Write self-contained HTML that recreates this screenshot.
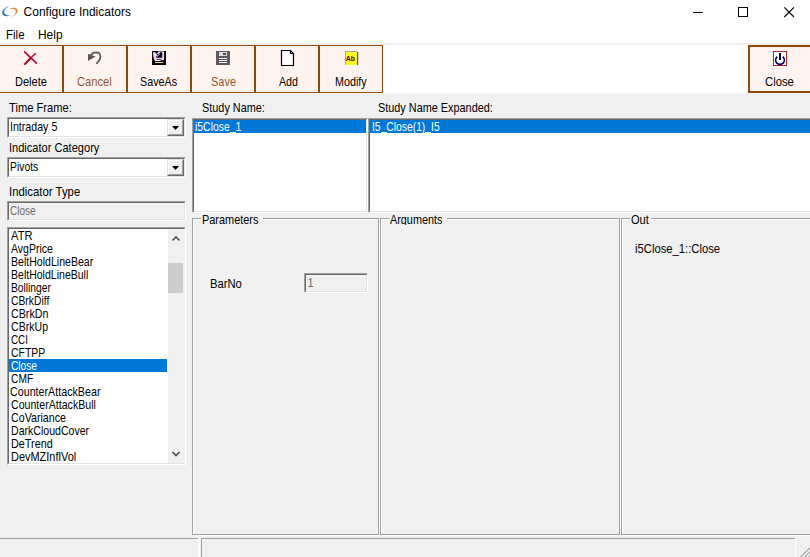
<!DOCTYPE html>
<html>
<head>
<meta charset="utf-8">
<title>Configure Indicators</title>
<style>
html,body{margin:0;padding:0;overflow:hidden;}
body{width:810px;height:557px;overflow:hidden;background:#f0f0f0;position:relative;
  font-family:"Liberation Sans",sans-serif;font-size:11px;line-height:13px;color:#000;}
.a{position:absolute;}
.t{position:absolute;white-space:nowrap;transform-origin:0 0;}
#titlebar{left:0;top:0;width:810px;height:30px;background:#fff;}
#menubar{left:0;top:24px;width:810px;height:19px;background:#fff;}
#tbline{left:0;top:43px;width:810px;height:2px;background:#f0f0f0;}
#toolbar{left:0;top:45px;width:810px;height:48px;background:#fff;overflow:hidden;border-bottom:1px solid #f8f7f6;}
.btn{position:absolute;top:0;width:62px;height:46px;border:1px solid #93480e;background:#fff4ef;}
/* sunken 3d */
.sunk{position:absolute;box-sizing:border-box;border:1px solid;border-color:#a0a0a0 #fff #fff #a0a0a0;background:#fff;}
.sunk>.in{position:absolute;left:0;top:0;right:0;bottom:0;box-sizing:border-box;border:1px solid;border-color:#696969 #e3e3e3 #e3e3e3 #696969;}
.sunk.g{background:#f0f0f0;}
.dd{position:absolute;right:1px;top:1px;width:17px;height:17px;box-sizing:border-box;background:#f0f0f0;border:1px solid;border-color:#e3e3e3 #696969 #696969 #e3e3e3;}
.dd:before{content:"";position:absolute;left:0;top:0;right:0;bottom:0;border:1px solid;border-color:#fff #a0a0a0 #a0a0a0 #fff;}
.dd:after{content:"";position:absolute;left:4px;top:6px;width:7px;height:4px;background:#000;clip-path:polygon(0 0,100% 0,50% 100%);}
.sel{position:absolute;background:#0078d7;height:13px;}
.gb{position:absolute;box-sizing:border-box;border:1px solid #a0a0a0;box-shadow:1px 1px 0 #fff, inset 1px 1px 0 #fff;}
.gl{position:absolute;background:#f0f0f0;height:13px;}
</style>
</head>
<body>
<!-- title bar -->
<div id="titlebar" class="a"></div>
<svg class="a" style="left:0;top:0" width="22" height="24" viewBox="0 0 22 24">
  <defs>
    <linearGradient id="lb1" x1="0" y1="1" x2="1" y2="0">
      <stop offset="0" stop-color="#1a62ad"/><stop offset="0.6" stop-color="#3f86c8"/><stop offset="1" stop-color="#a8cdec"/>
    </linearGradient>
    <linearGradient id="lo1" x1="1" y1="0" x2="0" y2="1">
      <stop offset="0" stop-color="#d9721c"/><stop offset="0.6" stop-color="#e89040"/><stop offset="1" stop-color="#f8d8b0"/>
    </linearGradient>
  </defs>
  <path d="M11.6 5.2C6 6 1.6 10 2.3 13.5C3 16.6 8 17 11.5 15.1C8 16 4.3 14.8 4.1 12.2C3.9 9.6 7.1 6.6 11.6 5.2Z" fill="url(#lb1)"/>
  <path d="M8.7 9.4C11 7.4 15.6 7 17.3 9.5C18.7 12 15 16.5 9.5 17.9C13.5 16.3 16.4 13 15.8 10.7C15.1 8.5 11 8.2 8.7 9.4Z" fill="url(#lo1)"/>
</svg>
<svg class="a" style="left:680px;top:0" width="130" height="30" viewBox="680 0 130 30">
  <path d="M693 12.5H703" stroke="#000" stroke-width="1" fill="none"/>
  <rect x="738.5" y="7.5" width="9" height="9" stroke="#000" stroke-width="1" fill="none"/>
  <path d="M784.3 7.3L794 17M794 7.3L784.3 17" stroke="#000" stroke-width="1.1" fill="none"/>
</svg>
<!-- menu -->
<div id="menubar" class="a"></div>
<div id="tbline" class="a"></div>
<!-- toolbar -->
<div id="toolbar" class="a">
  <div class="btn" style="left:-1px"></div>
  <div class="btn" style="left:63px"></div>
  <div class="btn" style="left:127px"></div>
  <div class="btn" style="left:191px"></div>
  <div class="btn" style="left:255px"></div>
  <div class="btn" style="left:319px"></div>
  <div class="btn" style="left:748px;border-width:2px;width:60px;height:44px"></div>
  <svg class="a" style="left:0;top:0" width="810" height="48" viewBox="0 45 810 48">
    <!-- delete -->
    <path d="M24.6 51.8L36.4 63.2" stroke="#b0082c" stroke-width="1.6" stroke-linecap="round" fill="none"/>
    <path d="M35.4 53.6L30.5 58.2" stroke="#b0082c" stroke-width="1.4" stroke-linecap="round" fill="none"/>
    <path d="M30.5 58.2L25 63.9" stroke="#b0082c" stroke-width="2.1" stroke-linecap="round" fill="none"/>
    <!-- cancel (undo) -->
    <path d="M88 54V61L95.6 56.4Z" fill="#5a5454"/>
    <path d="M90.5 55.6L93.5 52.6H98.6Q100.6 54.4 100.5 56.6Q100.2 59.4 98.4 61.2L96.9 63.3" stroke="#5a5454" stroke-width="1.7" fill="none" stroke-linejoin="round" stroke-linecap="round"/>
    <!-- saveas -->
    <rect x="152" y="51" width="14" height="14" fill="#000"/>
    <path d="M152.7 52.6L155 52L156.2 53.6L158.4 51.5H164.1V60.3H154.3L153.5 57.2Z" fill="#f3cdf7"/>
    <path d="M156.3 57.8V56.6L160.4 52.3L162.2 52.5V57.8Z" fill="#000"/>
    <path d="M155.2 51.4H158.4L156.3 54Z" fill="#000"/>
    <path d="M157 56.5L159.8 54" stroke="#f3cdf7" stroke-width="0.9" fill="none"/>
    <circle cx="157.6" cy="54.4" r="0.7" fill="#000"/>
    <path d="M156.5 59.4H161.4" stroke="#000" stroke-width="0.7"/>
    <path d="M155 60.5H160.7" stroke="#fff" stroke-width="0.9"/>
    <path d="M155 62.5H163.3" stroke="#e8e070" stroke-width="1"/>
    <!-- save -->
    <rect x="216" y="51" width="14" height="14" fill="#5c5a5a"/>
    <rect x="219" y="52" width="8" height="4" fill="#dcdcdc"/>
    <rect x="223" y="53" width="3" height="2" fill="#4a4a4a"/>
    <path d="M219 58.5H227M219 60.5H227M219 62.5H227" stroke="#f4f4f4" stroke-width="1"/>
    <!-- add -->
    <path d="M281.5 50.5H290.5L293.5 53.5V65.5H281.5Z" fill="#fff" stroke="#000" stroke-width="1.2"/>
    <path d="M290.5 50.5V53.5H293.5" fill="none" stroke="#000" stroke-width="1.2"/>
    <!-- modify -->
    <rect x="345.5" y="51.5" width="11" height="13" fill="#fdf820" stroke="#8c98a8" stroke-width="0.8"/>
    <rect x="346" y="52" width="11" height="13" fill="#fdf820"/>
    <rect x="357" y="52" width="1.2" height="13" fill="#4a5070"/>
    <text x="345.8" y="60.8" font-family="Liberation Sans, sans-serif" font-size="8" font-weight="bold" fill="#500000" textLength="9.2" lengthAdjust="spacingAndGlyphs">Ab</text>
    <!-- close -->
    <rect x="773.5" y="51.5" width="13" height="14" fill="#fff" stroke="#a82828" stroke-width="1"/>
    <rect x="779" y="53" width="2" height="7" fill="#000060"/>
    <path d="M777.3 56.6Q775.4 58.2 775.6 60.4Q776.2 64.2 780 64.4Q783.8 64.2 784.4 60.4Q784.6 58.2 782.7 56.6" stroke="#000060" stroke-width="1.6" fill="none"/>
    <rect x="779.5" y="65" width="1" height="1" fill="#600020"/>
  </svg>
</div>

<!-- left panel -->
<div class="sunk" style="left:7px;top:117px;width:179px;height:21px"><div class="in"></div><div class="dd"></div></div>
<div class="sunk" style="left:7px;top:157px;width:179px;height:21px"><div class="in"></div><div class="dd"></div></div>
<div class="sunk g" style="left:7px;top:201px;width:179px;height:20px"><div class="in"></div></div>

<div class="sunk" id="lb" style="left:7px;top:227px;width:179px;height:238px"><div class="in"></div>
  <div class="sel" style="left:1px;top:131px;width:158px"></div>
  <div class="a" style="left:160px;top:1px;width:17px;height:234px;background:#f0f0f0"></div>
  <div class="a" style="left:160px;top:35px;width:15px;height:30px;background:#cdcdcd"></div>
  <svg class="a" style="left:160px;top:1px" width="16" height="234" viewBox="0 0 16 234">
    <path d="M4.5 11.5L8 8L11.5 11.5" stroke="#505050" stroke-width="1.7" fill="none"/>
    <path d="M4.5 223L8 226.5L11.5 223" stroke="#505050" stroke-width="1.7" fill="none"/>
  </svg>
</div>

<!-- study name -->
<div class="sunk" style="left:192px;top:118px;width:176px;height:95px"><div class="in"></div>
  <div class="sel" style="left:1px;top:1px;width:172px"></div>
</div>
<div class="sunk" style="left:368px;top:118px;width:500px;height:95px"><div class="in"></div>
  <div class="sel" style="left:1px;top:1px;width:496px"></div>
</div>

<div class="a" style="left:230px;top:132px;width:6px;height:1px;background:#fff"></div>
<div class="a" style="left:381px;top:132px;width:6px;height:1px;background:#fff"></div>
<div class="a" style="left:425px;top:132px;width:6px;height:1px;background:#fff"></div>
<!-- group boxes -->
<div class="gb" style="left:192px;top:218px;width:187px;height:317px"></div>
<div class="gl" style="left:201px;top:213px;width:62px"></div>
<div class="gb" style="left:380px;top:218px;width:240px;height:317px"></div>
<div class="gl" style="left:389px;top:213px;width:58px"></div>
<div class="gb" style="left:621px;top:218px;width:300px;height:317px"></div>
<div class="gl" style="left:630px;top:213px;width:21px"></div>

<div class="sunk g" style="left:304px;top:273px;width:64px;height:20px"><div class="in"></div></div>

<!-- status bar -->
<div class="a" style="left:0;top:538px;width:198px;height:1px;background:#a0a0a0"></div>
<div class="a" style="left:198px;top:538px;width:2px;height:19px;background:#fff"></div>
<div class="a" style="left:201px;top:538px;width:594px;height:1px;background:#a0a0a0"></div>
<div class="a" style="left:201px;top:538px;width:1px;height:19px;background:#a0a0a0"></div>
<div class="a" style="left:795px;top:538px;width:1px;height:19px;background:#fff"></div>
<svg class="a" style="left:797px;top:544px" width="14" height="14" viewBox="0 0 14 14">
  <path d="M3 14L14 3M7 14L14 7M11 14L14 11" stroke="#a0a0a0" stroke-width="1.4" fill="none"/>
  <path d="M4.4 14L14 4.4M8.4 14L14 8.4M12.4 14L14 12.4" stroke="#fff" stroke-width="1" fill="none"/>
</svg>

<!-- text -->
<div class="t" style="left:23.55px;top:5px;font-size:12px;line-height:14px;color:#000;transform:scale(1.0000,1.0);transform-origin:0 11.16px;">Configure Indicators</div>
<div class="t" style="left:5.78px;top:28px;font-size:12px;line-height:14px;color:#000;transform:scale(0.9589,1.0);transform-origin:0 11.16px;">File</div>
<div class="t" style="left:37.76px;top:28px;font-size:12px;line-height:14px;color:#000;transform:scale(0.9943,1.0);transform-origin:0 11.16px;">Help</div>
<div class="t" style="left:15.15px;top:75.69px;font-size:11px;line-height:13px;color:#000;transform:scale(1.0042,1.12);transform-origin:0 10.31px;">Delete</div>
<div class="t" style="left:76.88px;top:75.69px;font-size:11px;line-height:13px;color:#8e5630;transform:scale(1.0138,1.12);transform-origin:0 10.31px;">Cancel</div>
<div class="t" style="left:140.03px;top:75.69px;font-size:11px;line-height:13px;color:#000;transform:scale(0.9798,1.12);transform-origin:0 10.31px;">SaveAs</div>
<div class="t" style="left:211.02px;top:75.69px;font-size:11px;line-height:13px;color:#8e5630;transform:scale(0.9984,1.12);transform-origin:0 10.31px;">Save</div>
<div class="t" style="left:278.50px;top:75.69px;font-size:11px;line-height:13px;color:#000;transform:scale(0.9684,1.12);transform-origin:0 10.31px;">Add</div>
<div class="t" style="left:335.27px;top:75.69px;font-size:11px;line-height:13px;color:#000;transform:scale(0.9779,1.12);transform-origin:0 10.31px;">Modify</div>
<div class="t" style="left:765.28px;top:75.69px;font-size:11px;line-height:13px;color:#000;transform:scale(1.0251,1.12);transform-origin:0 10.31px;">Close</div>
<div class="t" style="left:9.35px;top:101.69px;font-size:11px;line-height:13px;color:#000;transform:scale(1.0139,1.12);transform-origin:0 10.31px;">Time Frame:</div>
<div class="t" style="left:9.76px;top:120.69px;font-size:11px;line-height:13px;color:#000;transform:scale(0.9672,1.12);transform-origin:0 10.31px;">Intraday 5</div>
<div class="t" style="left:9.03px;top:141.69px;font-size:11px;line-height:13px;color:#000;transform:scale(1.0052,1.12);transform-origin:0 10.31px;">Indicator Category</div>
<div class="t" style="left:10.09px;top:160.69px;font-size:11px;line-height:13px;color:#000;transform:scale(0.9456,1.12);transform-origin:0 10.31px;">Pivots</div>
<div class="t" style="left:9.01px;top:185.69px;font-size:11px;line-height:13px;color:#000;transform:scale(1.0346,1.12);transform-origin:0 10.31px;">Indicator Type</div>
<div class="t" style="left:9.81px;top:204.69px;font-size:11px;line-height:13px;color:#6d6d6d;transform:scale(0.9092,1.12);transform-origin:0 10.31px;">Close</div>
<div class="t" style="left:201.82px;top:101.69px;font-size:11px;line-height:13px;color:#000;transform:scale(0.9892,1.12);transform-origin:0 10.31px;">Study Name:</div>
<div class="t" style="left:195.04px;top:120.69px;font-size:11px;line-height:13px;color:#fff;transform:scale(0.9482,1.12);transform-origin:0 10.31px;">i5Close_1</div>
<div class="t" style="left:378.12px;top:101.69px;font-size:11px;line-height:13px;color:#000;transform:scale(0.9879,1.12);transform-origin:0 10.31px;">Study Name Expanded:</div>
<div class="t" style="left:372.08px;top:120.69px;font-size:11px;line-height:13px;color:#fff;transform:scale(0.9374,1.12);transform-origin:0 10.31px;">I5_Close(1)_I5</div>
<div class="t" style="left:201.86px;top:213.69px;font-size:11px;line-height:13px;color:#000;transform:scale(0.9928,1.12);transform-origin:0 10.31px;">Parameters</div>
<div class="t" style="left:390.00px;top:213.69px;font-size:11px;line-height:13px;color:#000;transform:scale(0.9849,1.12);transform-origin:0 10.31px;height:11.4px;overflow:hidden;">Arguments</div>
<div class="t" style="left:631.05px;top:213.69px;font-size:11px;line-height:13px;color:#000;transform:scale(1.0044,1.12);transform-origin:0 10.31px;">Out</div>
<div class="t" style="left:209.64px;top:278.29px;font-size:11px;line-height:13px;color:#000;transform:scale(1.0219,1.12);transform-origin:0 10.31px;">BarNo</div>
<div class="t" style="left:307.60px;top:276.69px;font-size:11px;line-height:13px;color:#6d6d6d;transform:scale(1.0000,1.12);transform-origin:0 10.31px;">1</div>
<div class="t" style="left:634.81px;top:242.69px;font-size:11px;line-height:13px;color:#000;transform:scale(1.0226,1.12);transform-origin:0 10.31px;">i5Close_1::Close</div>
<div class="t" style="left:11.30px;top:229.69px;font-size:11px;line-height:13px;color:#000;transform:scale(1.0176,1.12);transform-origin:0 10.31px;">ATR</div>
<div class="t" style="left:11.30px;top:242.69px;font-size:11px;line-height:13px;color:#000;transform:scale(0.9560,1.12);transform-origin:0 10.31px;">AvgPrice</div>
<div class="t" style="left:10.68px;top:255.69px;font-size:11px;line-height:13px;color:#000;transform:scale(0.9603,1.12);transform-origin:0 10.31px;">BeltHoldLineBear</div>
<div class="t" style="left:10.68px;top:268.69px;font-size:11px;line-height:13px;color:#000;transform:scale(0.9577,1.12);transform-origin:0 10.31px;">BeltHoldLineBull</div>
<div class="t" style="left:10.70px;top:281.69px;font-size:11px;line-height:13px;color:#000;transform:scale(0.9312,1.12);transform-origin:0 10.31px;">Bollinger</div>
<div class="t" style="left:10.51px;top:294.69px;font-size:11px;line-height:13px;color:#000;transform:scale(0.9392,1.12);transform-origin:0 10.31px;">CBrkDiff</div>
<div class="t" style="left:10.50px;top:307.69px;font-size:11px;line-height:13px;color:#000;transform:scale(0.9712,1.12);transform-origin:0 10.31px;">CBrkDn</div>
<div class="t" style="left:10.50px;top:320.69px;font-size:11px;line-height:13px;color:#000;transform:scale(0.9622,1.12);transform-origin:0 10.31px;">CBrkUp</div>
<div class="t" style="left:10.52px;top:333.69px;font-size:11px;line-height:13px;color:#000;transform:scale(0.8959,1.12);transform-origin:0 10.31px;">CCI</div>
<div class="t" style="left:10.50px;top:346.69px;font-size:11px;line-height:13px;color:#000;transform:scale(0.9481,1.12);transform-origin:0 10.31px;">CFTPP</div>
<div class="t" style="left:10.51px;top:359.69px;font-size:11px;line-height:13px;color:#fff;transform:scale(0.9237,1.12);transform-origin:0 10.31px;">Close</div>
<div class="t" style="left:10.51px;top:372.69px;font-size:11px;line-height:13px;color:#000;transform:scale(0.9306,1.12);transform-origin:0 10.31px;">CMF</div>
<div class="t" style="left:10.49px;top:385.69px;font-size:11px;line-height:13px;color:#000;transform:scale(0.9736,1.12);transform-origin:0 10.31px;">CounterAttackBear</div>
<div class="t" style="left:10.50px;top:398.69px;font-size:11px;line-height:13px;color:#000;transform:scale(0.9638,1.12);transform-origin:0 10.31px;">CounterAttackBull</div>
<div class="t" style="left:10.50px;top:411.69px;font-size:11px;line-height:13px;color:#000;transform:scale(0.9693,1.12);transform-origin:0 10.31px;">CoVariance</div>
<div class="t" style="left:10.68px;top:424.69px;font-size:11px;line-height:13px;color:#000;transform:scale(0.9603,1.12);transform-origin:0 10.31px;">DarkCloudCover</div>
<div class="t" style="left:10.66px;top:437.69px;font-size:11px;line-height:13px;color:#000;transform:scale(0.9846,1.12);transform-origin:0 10.31px;">DeTrend</div>
<div class="t" style="left:10.65px;top:450.69px;font-size:11px;line-height:13px;color:#000;transform:scale(0.9963,1.12);transform-origin:0 10.31px;">DevMZInflVol</div>
</body>
</html>
